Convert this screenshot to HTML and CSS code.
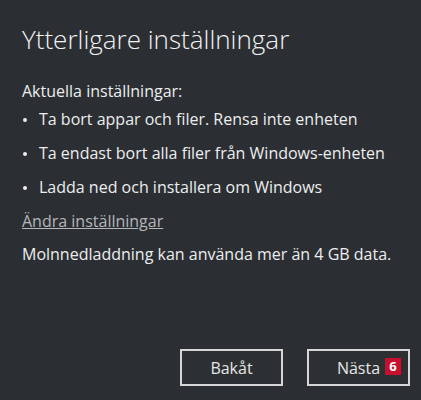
FILE: index.html
```html
<!DOCTYPE html>
<html lang="sv">
<head>
  <meta charset="UTF-8" />
  <meta name="viewport" content="width=device-width, initial-scale=1.0" />
  <title>Ytterligare inställningar</title>
  <link rel="stylesheet" href="styles.css">
</head>
<body>
  <div class="dialog">
    <div class="content">
      <h1 class="title">Ytterligare inställningar</h1>
      <p class="label">Aktuella inställningar:</p>
      <ul class="settings">
        <li>Ta bort appar och filer. Rensa inte enheten</li>
        <li>Ta endast bort alla filer från Windows-enheten</li>
        <li>Ladda ned och installera om Windows</li>
      </ul>
      <a class="change" href="#">Ändra inställningar</a>
      <p class="note">Molnnedladdning kan använda mer än 4 GB data.</p>
    </div>
    <div class="actions">
      <button class="btn" type="button">Bakåt</button>
      <button class="btn next" type="button">Nästa<span class="badge">6</span></button>
    </div>
  </div>
</body>
</html>
```

FILE: styles.css
```css
body {
  margin: 0;
  background: #2b2f33;
  color: #ededed;
  font-family: "Open Sans", "Noto Sans", sans-serif;
}
.dialog {
  height: 400px;
  box-sizing: border-box;
  display: flex;
  flex-direction: column;
  justify-content: space-between;
  padding: 0 11px 14px 22px;
}
.title {
  margin: 21px 0 0;
  font-size: 26px;
  font-weight: 300;
  line-height: 36px;
  color: #f2f2f2;
}
.label {
  margin: 23px 0 0;
  font-size: 16px;
  line-height: 22px;
}
.settings {
  list-style: none;
  margin: 6px 0 0;
  padding: 0;
}
.settings li {
  position: relative;
  padding-left: 17px;
  font-size: 16px;
  line-height: 22px;
  margin-bottom: 12px;
}
.settings li::before {
  content: "";
  position: absolute;
  left: 1px;
  top: 10px;
  width: 4px;
  height: 4px;
  border-radius: 50%;
  background: #ededed;
}
.change {
  display: inline-block;
  font-size: 16px;
  line-height: 22px;
  color: #b4b6b8;
  text-decoration: underline;
}
.note {
  margin: 11px 0 0;
  font-size: 16px;
  line-height: 22px;
}
.actions {
  display: flex;
  justify-content: flex-end;
  gap: 24px;
}
.btn {
  position: relative;
  width: 103px;
  height: 37px;
  background: #2d3033;
  border: 2px solid #d6d6d6;
  color: #e6e6e6;
  font-family: "Open Sans", "Noto Sans", sans-serif;
  font-size: 16px;
  padding: 0;
}
.badge {
  position: absolute;
  right: 7px;
  top: 7px;
  width: 16px;
  height: 17px;
  background: #c8102e;
  color: #fff;
  font-size: 13px;
  font-weight: 700;
  line-height: 17px;
  text-align: center;
}
```
